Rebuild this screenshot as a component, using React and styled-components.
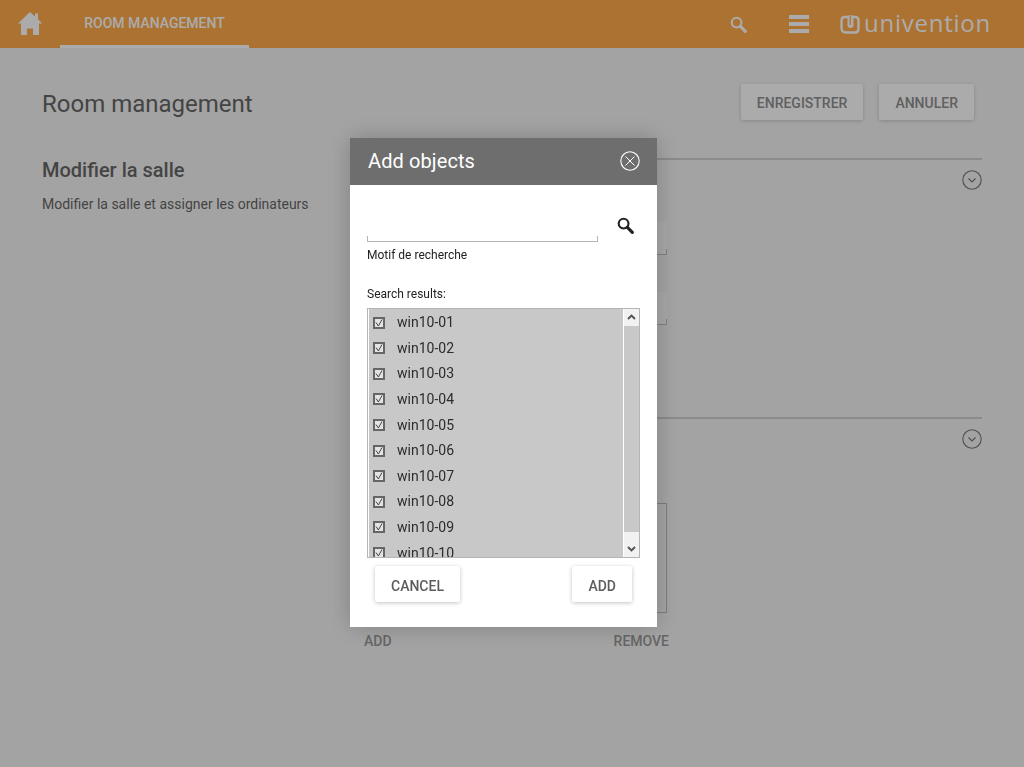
import React from 'react';
import styled, { createGlobalStyle } from 'styled-components';

const Global = createGlobalStyle`
  html, body { margin: 0; padding: 0; height: 100%; overflow: hidden; }
  body { font-family: Roboto, "Liberation Sans", sans-serif; background: #f4f4f4; }
  * { box-sizing: border-box; }
`;

const Page = styled.div`
  width: 1024px;
  height: 767px;
  background: #f4f4f4;
  display: flex;
  flex-direction: column;
`;

const TopBar = styled.header`
  height: 48px;
  flex: none;
  background: #ffaa49;
  display: flex;
  align-items: stretch;
  color: #fff;
`;

const HomeLink = styled.div`
  width: 60px;
  padding: 12px 0 0 18px;
`;

const Tab = styled.div`
  width: 189px;
  padding-top: 1px;
  display: flex;
  align-items: center;
  justify-content: center;
  font-size: 14px;
  font-weight: 500;
  text-transform: uppercase;
  border-bottom: 3px solid #fff;
`;

const BarTools = styled.div`
  margin-left: auto;
  display: flex;
  align-items: center;
  padding-right: 33px;
`;

const SearchTool = styled.div`
  display: flex;
  margin-right: 42px;
`;

const MenuTool = styled.div`
  width: 20px;
  height: 18px;
  margin-right: 31px;
  display: flex;
  flex-direction: column;
  justify-content: space-between;
  span { display: block; height: 4px; background: #fff; }
`;

const Logo = styled.div`
  display: flex;
  align-items: center;
  gap: 4px;
`;

const LogoWord = styled.span`
  font-family: "Open Sans", sans-serif;
  font-size: 24px;
  font-weight: 400;
  letter-spacing: 0.75px;
  line-height: 28px;
  margin-top: -3px;
`;

const Main = styled.main`
  padding: 36px 42px 0;
  flex: 1;
`;

const TitleRow = styled.div`
  display: flex;
  justify-content: space-between;
  align-items: center;
  height: 36px;
  padding-right: 8px;
`;

const PageTitle = styled.h1`
  margin: 0;
  padding-top: 4px;
  font-size: 24px;
  font-weight: 400;
  color: #666;
`;

const Actions = styled.div`
  display: flex;
  gap: 16px;
`;

const RaisedButton = styled.button`
  height: 36px;
  padding: ${p => p.$muted ? '1px' : '4px'} 16px 0;
  border: 0;
  border-radius: 2px;
  background: #fff;
  color: ${p => p.$muted ? '#8f8f8f' : '#5c5c5c'};
  font: 500 14px Roboto, sans-serif;
  text-transform: uppercase;
  box-shadow: 0 1px 4px rgba(0, 0, 0, ${p => p.$muted ? 0.18 : 0.24});
`;

const Columns = styled.div`
  display: flex;
  margin-top: 38px;
`;

const Intro = styled.div`
  width: 308px;
  flex: none;
`;

const IntroTitle = styled.h2`
  margin: 0;
  font-size: 20px;
  font-weight: 500;
  line-height: 24px;
  color: #666;
`;

const IntroText = styled.p`
  margin: 12px 0 0;
  font-size: 14px;
  line-height: 20px;
  color: #666;
`;

const Sections = styled.div`
  flex: 1;
`;

const Section = styled.section`
  border-top: 2px solid #cfcfcf;
  height: ${p => p.$h}px;
  padding: 10px 0 0 17px;
  position: relative;
`;

const Toggle = styled.div`
  display: flex;
  justify-content: flex-end;
  height: 20px;
`;

const Field = styled.div`
  width: 300px;
  height: 33px;
  margin-top: ${p => p.$mt}px;
  background: #fff;
  opacity: 0.55;
  border-bottom: 1px solid #999;
  position: relative;
  &::after {
    content: '';
    position: absolute;
    right: 0;
    bottom: 0;
    height: 5px;
    border-right: 1px solid #999;
  }
`;

const ListBox = styled.div`
  width: 300px;
  height: 110px;
  margin-top: 54px;
  border: 1px solid #bbb;
`;

const ListActions = styled.div`
  width: 305px;
  margin: 20px 0 0 -3px;
  display: flex;
  justify-content: space-between;
`;

const FlatAction = styled.span`
  font-size: 14px;
  font-weight: 500;
  text-transform: uppercase;
  color: #999;
`;

const Underlay = styled.div`
  position: fixed;
  inset: 0;
  background: rgba(0, 0, 0, 0.33);
`;

const Dialog = styled.div`
  position: fixed;
  left: 350px;
  top: 138px;
  width: 307px;
  height: 489px;
  background: #fff;
  box-shadow: 0 0 24px rgba(0, 0, 0, 0.22);
`;

const DialogHead = styled.div`
  height: 47px;
  background: #6e6e6e;
  color: #fff;
  display: flex;
  align-items: center;
  justify-content: space-between;
  padding: 0 17px 2px 18px;
`;

const DialogTitle = styled.span`
  font-size: 20px;
  font-weight: 400;
  letter-spacing: 0.1px;
`;

const DialogBody = styled.div`
  padding: 29px 17px 0;
`;

const SearchRow = styled.div`
  display: flex;
  height: 28px;
`;

const SearchInput = styled.div`
  width: 231px;
  height: 28px;
  border-bottom: 1px solid #b5b5b5;
  position: relative;
  &::before, &::after {
    content: '';
    position: absolute;
    bottom: 0;
    height: 5px;
    width: 1px;
    background: #b5b5b5;
  }
  &::before { left: 0; }
  &::after { right: 0; }
`;

const SearchButton = styled.div`
  margin: 3px 0 0 19px;
`;

const SmallLabel = styled.div`
  font-size: 12px;
  line-height: 16px;
  color: #222;
  margin-top: ${p => p.$mt}px;
`;

const Results = styled.div`
  margin-top: 6px;
  width: 273px;
  height: 250px;
  border: 1px solid #b5b5b5;
  padding-left: 1px;
  display: flex;
`;

const ResultList = styled.div`
  flex: 1;
  overflow: hidden;
  padding-top: 0.4px;
  background: #c8c8c8;
`;

const ResultRow = styled.div`
  height: 25.6px;
  display: flex;
  align-items: center;
  padding-left: 4px;
  font-size: 14px;
  color: #2c2c2c;
`;

const Check = styled.span`
  width: 12px;
  height: 12px;
  flex: none;
  margin: 1px 12px 0 0;
  border: 2px solid #666;
  background: #e4e4e4;
  display: flex;
  align-items: center;
  justify-content: center;
`;

const ScrollBar = styled.div`
  width: 15px;
  margin-left: 1px;
  display: flex;
  flex-direction: column;
  background: #f1f1f1;
`;

const ScrollArrow = styled.div`
  height: ${p => p.$h}px;
  display: flex;
  align-items: ${p => p.$end ? 'flex-end' : 'flex-start'};
  justify-content: center;
  padding: 5px 0;
`;

const ScrollThumb = styled.div`
  flex: 1;
  background: #c8c8c8;
`;

const DialogFoot = styled.div`
  margin-top: 8px;
  width: 273px;
  padding: 0 8px;
  display: flex;
  justify-content: space-between;
`;

const HomeIcon = () => (
  <svg width="24" height="23" viewBox="0 0 24 23" fill="#fff">
    <path d="M12 0 L17 4.4 V1.5 H20 V7 L24 11.5 H21 V23 H15 V16.5 H9 V23 H3 V11.5 H0 Z" />
  </svg>
);

const SearchIcon = ({ size, color, width }) => (
  <svg width={size} height={size} viewBox="0 0 16 16" fill="none" stroke={color}>
    <circle cx="6.2" cy="6.2" r="4.6" strokeWidth={width} />
    <path d="M9.8 9.8 L14.4 14.4" strokeWidth={width + 1} strokeLinecap="round" />
  </svg>
);

const ChevronCircle = () => (
  <svg width="20" height="20" viewBox="0 0 20 20" fill="none" stroke="#777">
    <circle cx="10" cy="10" r="9.2" strokeWidth="1.1" />
    <path d="M6.5 8.5 L10 12 L13.5 8.5" strokeWidth="1.2" />
  </svg>
);

const CloseCircle = () => (
  <svg width="20" height="20" viewBox="0 0 20 20" fill="none" stroke="#fff">
    <circle cx="10" cy="10" r="9.2" strokeWidth="1.1" />
    <path d="M5.5 5.5 L14.5 14.5 M14.5 5.5 L5.5 14.5" strokeWidth="1" />
  </svg>
);

const LogoMark = () => (
  <svg width="20" height="20" viewBox="0 0 20 20" fill="none">
    <path d="M5 3 H15 Q18.5 3 18.5 6.5 V15 Q18.5 18.5 15 18.5 H6 Q1.5 18.5 1.5 14 V6.5 Q1.5 3 5 3 Z" stroke="#fff" strokeWidth="2.4" />
    <path d="M7.5 1.5 V11 Q7.5 14 10.5 14 Q13.5 14 13.5 11 V1.5 Z" fill="#fff" />
    <path d="M10.2 2 V11" stroke="#ffaa49" strokeWidth="1.2" />
  </svg>
);

const Tick = () => (
  <svg width="8" height="8" viewBox="0 0 8 8" fill="none" stroke="#444" strokeWidth="1">
    <path d="M1 3.5 L3.4 7 L7 0.5" />
  </svg>
);

const Arrow = ({ up }) => (
  <svg width="9" height="6" viewBox="0 0 9 6" fill="none" stroke="#505050" strokeWidth="1.8">
    <path d={up ? 'M1 5 L4.5 1.5 L8 5' : 'M1 1 L4.5 4.5 L8 1'} />
  </svg>
);

const machines = ['01', '02', '03', '04', '05', '06', '07', '08', '09', '10'].map(n => `win10-${n}`);

export default function App() {
  return (
    <>
      <Global />
      <Page>
        <TopBar>
          <HomeLink><HomeIcon /></HomeLink>
          <Tab>Room management</Tab>
          <BarTools>
            <SearchTool><SearchIcon size={17} color="#fff" width={2} /></SearchTool>
            <MenuTool><span /><span /><span /></MenuTool>
            <Logo>
              <LogoMark />
              <LogoWord>univention</LogoWord>
            </Logo>
          </BarTools>
        </TopBar>
        <Main>
          <TitleRow>
            <PageTitle>Room management</PageTitle>
            <Actions>
              <RaisedButton $muted>Enregistrer</RaisedButton>
              <RaisedButton $muted>Annuler</RaisedButton>
            </Actions>
          </TitleRow>
          <Columns>
            <Intro>
              <IntroTitle>Modifier la salle</IntroTitle>
              <IntroText>Modifier la salle et assigner les ordinateurs</IntroText>
            </Intro>
            <Sections>
              <Section $h={259}>
                <Toggle><ChevronCircle /></Toggle>
                <Field $mt={32} />
                <Field $mt={37} />
              </Section>
              <Section $h={240}>
                <Toggle><ChevronCircle /></Toggle>
                <ListBox />
                <ListActions>
                  <FlatAction>Add</FlatAction>
                  <FlatAction>Remove</FlatAction>
                </ListActions>
              </Section>
            </Sections>
          </Columns>
        </Main>
      </Page>
      <Underlay />
      <Dialog>
        <DialogHead>
          <DialogTitle>Add objects</DialogTitle>
          <CloseCircle />
        </DialogHead>
        <DialogBody>
          <SearchRow>
            <SearchInput />
            <SearchButton><SearchIcon size={17} color="#222" width={2} /></SearchButton>
          </SearchRow>
          <SmallLabel $mt={5}>Motif de recherche</SmallLabel>
          <SmallLabel $mt={23}>Search results:</SmallLabel>
          <Results>
            <ResultList>
              {machines.map(m => (
                <ResultRow key={m}><Check><Tick /></Check>{m}</ResultRow>
              ))}
            </ResultList>
            <ScrollBar>
              <ScrollArrow $h={17}><Arrow up /></ScrollArrow>
              <ScrollThumb />
              <ScrollArrow $h={25} $end><Arrow /></ScrollArrow>
            </ScrollBar>
          </Results>
          <DialogFoot>
            <RaisedButton>Cancel</RaisedButton>
            <RaisedButton>Add</RaisedButton>
          </DialogFoot>
        </DialogBody>
      </Dialog>
    </>
  );
}
